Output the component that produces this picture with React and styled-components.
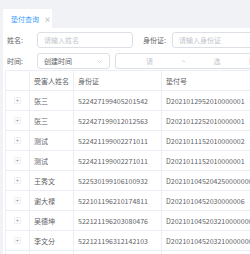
import React from "react"
import styled, {createGlobalStyle} from "styled-components"

const GlobalStyle = createGlobalStyle`
  html, body {
    margin: 0;
    padding: 0;
    background: #f0f2f5;
    font-family: "Noto Sans CJK SC", "Noto Sans", sans-serif;
    color: #606266;
  }
`

const Page = styled.div`
  width: 250px;
  height: 254px;
  overflow: hidden;
  background: #f0f2f5;
`

const TabBar = styled.div`
  height: 28px;
  display: flex;
  align-items: flex-end;
  padding-left: 3px;
`

const Tab = styled.div`
  height: 19px;
  width: 49px;
  background: #fff;
  display: flex;
  align-items: center;
  padding-left: 8px;
  box-sizing: border-box;
  font-size: 7px;
  color: #409eff;
`

const Close = styled.span`
  margin-left: 5px;
  color: #909399;
  font-size: 7px;
`

const Content = styled.div`
  margin-left: 3px;
  background: #fff;
  height: 226px;
  padding-left: 4px;
  width: 260px;
`

const FormRow = styled.div`
  display: flex;
  align-items: center;
  height: 16px;
  padding-top: ${p => p.$top}px;
`

const Label = styled.span`
  width: ${p => p.$w}px;
  font-size: 7px;
  color: #606266;
  flex-shrink: 0;
`

const Input = styled.div`
  width: ${p => p.$w}px;
  height: 16px;
  box-sizing: border-box;
  border: 1px solid #dcdfe6;
  border-radius: 3px;
  display: flex;
  align-items: center;
  padding: 0 6px;
  font-size: 7px;
  color: ${p => (p.$value ? "#606266" : "#c0c4cc")};
  flex-shrink: 0;
  margin-right: ${p => p.$mr || 0}px;
`

const Chevron = styled.svg`
  margin-left: auto;
`

const RangeInput = styled(Input)`
  justify-content: space-between;
  padding: 0 8px 0 30px;
`

const RangeText = styled.span`
  color: #c0c4cc;
  font-size: 7px;
`

const Table = styled.div`
  margin-top: 1px;
  margin-left: -2px;
  border-left: 1px solid #ebeef5;
  border-top: 1px solid #ebeef5;
`

const Row = styled.div`
  display: grid;
  grid-template-columns: 24px 44px 88px 100px;
  height: 20px;
  border-bottom: 1px solid #ebeef5;
  box-sizing: border-box;
`

const Cell = styled.div`
  border-right: 1px solid #ebeef5;
  display: flex;
  align-items: center;
  padding-left: ${p => p.$pl ?? 4}px;
  font-size: 7px;
  color: #606266;
  white-space: nowrap;
  overflow: hidden;
  justify-content: ${p => (p.$center ? "center" : "flex-start")};
`

const Expand = styled.span`
  width: 7px;
  height: 7px;
  border: 1px solid #ebeef5;
  box-sizing: border-box;
  display: flex;
  align-items: center;
  justify-content: center;
  font-size: 6px;
  line-height: 1;
  color: #909399;
  border-radius: 1px;
`

const rows = [
  ["张三", "522427199405201542", "D2021012952010000001"],
  ["张三", "522427199012012563", "D2021012252010000001"],
  ["测试", "522421199002271011", "D2021011152010000002"],
  ["测试", "522421199002271011", "D2021011152010000001"],
  ["王秀文", "522530199106100932", "D2021010452042500000001"],
  ["谢大禄", "522101196210174811", "D2021010452030000006"],
  ["吴德坤", "522121196203080476", "D2021010452032100000001"],
  ["李文分", "522121196312142103", "D2021010452032100000002"],
  ["", "", ""],
]

export default function App() {
  return (
    <Page>
      <GlobalStyle />
      <TabBar>
        <Tab>
          垫付查询<Close>×</Close>
        </Tab>
      </TabBar>
      <Content>
        <FormRow $top={4}>
          <Label $w={30}>姓名:</Label>
          <Input $w={96} $mr={10}>请输入姓名</Input>
          <Label $w={29}>身份证:</Label>
          <Input $w={100}>请输入身份证</Input>
        </FormRow>
        <FormRow $top={5}>
          <Label $w={30}>时间:</Label>
          <Input $w={73} $mr={5} $value>
            创建时间
            <Chevron width="7" height="7" viewBox="0 0 10 10">
              <path d="M2 3.5 L5 6.5 L8 3.5" fill="none" stroke="#c0c4cc" strokeWidth="1" />
            </Chevron>
          </Input>
          <RangeInput $w={150}>
            <RangeText>请</RangeText>
            <RangeText>~</RangeText>
            <RangeText>选</RangeText>
            <RangeText>回</RangeText>
          </RangeInput>
        </FormRow>
        <Table>
          <Row>
            <Cell />
            <Cell>受害人姓名</Cell>
            <Cell>身份证</Cell>
            <Cell>垫付号</Cell>
          </Row>
          {rows.map((r, i) => (
            <Row key={i}>
              <Cell $center $pl={0}>
                {r[0] && <Expand>+</Expand>}
              </Cell>
              <Cell>{r[0]}</Cell>
              <Cell>{r[1]}</Cell>
              <Cell>{r[2]}</Cell>
            </Row>
          ))}
        </Table>
      </Content>
    </Page>
  )
}
